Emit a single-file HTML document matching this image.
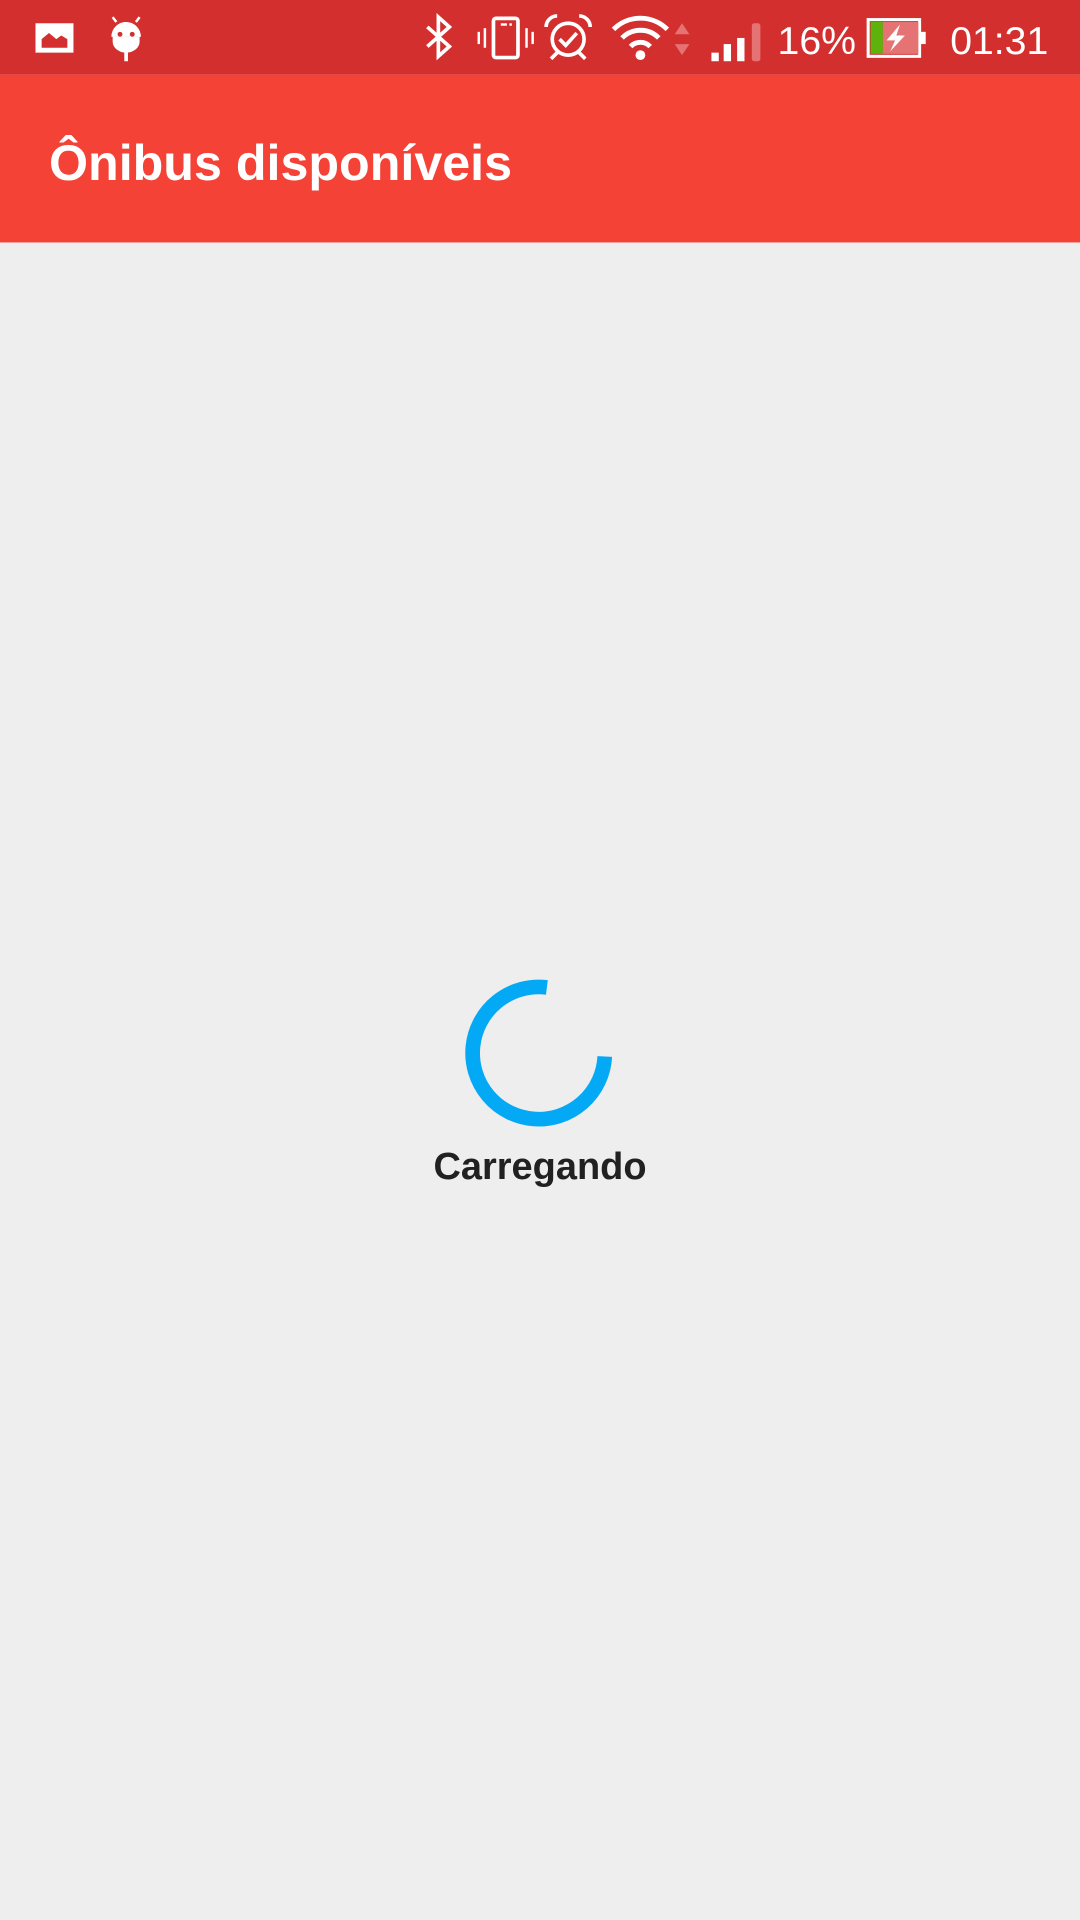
<!DOCTYPE html>
<html><head><meta charset="utf-8">
<style>
html,body{margin:0;padding:0;width:1080px;height:1920px;overflow:hidden;background:#EEEEEE;}
#w{position:absolute;left:0;top:0;width:882px;height:1568px;transform:scale(1.22449);transform-origin:0 0;font-family:"Liberation Sans",sans-serif;}
.sb{position:absolute;left:0;top:0;width:882px;height:61px;background:#D32F2F;}
.ab{position:absolute;left:0;top:61px;width:882px;height:137px;background:#F44336;}
.title{position:absolute;left:40px;top:42px;color:#fff;font-size:41px;font-weight:bold;line-height:60px;}
.t{position:absolute;color:#fff;font-size:32px;line-height:40px;top:13px;}
.lbl{position:absolute;left:0;width:882px;top:932px;text-align:center;font-size:31px;font-weight:bold;color:#212121;line-height:42px;}
</style></head><body>
<div id="w">
<div class="sb">
<svg width="882" height="61" style="position:absolute;left:0;top:0">
 <rect x="29" y="19" width="31" height="24" fill="#fff"/>
 <path d="M34 39 V32 L40 27 L46 32 L50 29 L55 32 V39 Z" fill="#D32F2F"/>
 <circle cx="103" cy="30" r="12" fill="#fff"/>
 <rect x="89" y="30" width="28" height="10" fill="#D32F2F"/>
 <path d="M91 30 A12 12 0 0 1 115 30 Z" fill="#fff"/>
 <path d="M92 30 h22 v4 a11 9 0 0 1 -22 0 z" fill="#fff"/>
 <line x1="95" y1="18" x2="92" y2="14" stroke="#fff" stroke-width="2"/>
 <line x1="111" y1="18" x2="114" y2="14" stroke="#fff" stroke-width="2"/>
 <circle cx="98" cy="28" r="2" fill="#D32F2F"/><circle cx="108" cy="28" r="2" fill="#D32F2F"/>
 <rect x="101.5" y="40" width="3" height="10" fill="#fff"/>
 <path d="M349 22 L367 38 L358 46 V14 L367 22 L349 38" fill="none" stroke="#fff" stroke-width="3"/>
 <rect x="403" y="15" width="20" height="32" rx="2" fill="none" stroke="#fff" stroke-width="3"/>
 <rect x="409" y="19" width="5" height="2" fill="#fff"/><rect x="416" y="19" width="2" height="2" fill="#fff"/>
 <rect x="395" y="23" width="2" height="16" fill="#fff"/><rect x="390" y="26" width="2" height="10" fill="#fff"/>
 <rect x="429" y="23" width="2" height="16" fill="#fff"/><rect x="434" y="26" width="2" height="10" fill="#fff"/>
 <circle cx="464" cy="32" r="13" fill="none" stroke="#fff" stroke-width="3"/>
 <path d="M457 32 L462 37 L471 27" fill="none" stroke="#fff" stroke-width="3"/>
 <path d="M446 22 A9 9 0 0 1 455 13" fill="none" stroke="#fff" stroke-width="3"/>
 <path d="M482 22 A9 9 0 0 0 473 13" fill="none" stroke="#fff" stroke-width="3"/>
 <line x1="455" y1="43" x2="450" y2="48" stroke="#fff" stroke-width="3"/>
 <line x1="473" y1="43" x2="478" y2="48" stroke="#fff" stroke-width="3"/>
 <path d="M501 24 A31 31 0 0 1 545 24" fill="none" stroke="#fff" stroke-width="4"/>
 <path d="M508 31 A21 21 0 0 1 538 31" fill="none" stroke="#fff" stroke-width="4"/>
 <path d="M515 38 A11 11 0 0 1 531 38" fill="none" stroke="#fff" stroke-width="4"/>
 <circle cx="523" cy="45" r="4" fill="#fff"/>
 <path d="M551 28 L557 19 L563 28 Z" fill="#E57373"/>
 <path d="M551 36 L557 45 L563 36 Z" fill="#E57373"/>
 <rect x="581" y="43" width="6" height="7" fill="#fff"/>
 <rect x="591" y="36" width="6" height="14" fill="#fff"/>
 <rect x="602" y="31" width="6" height="19" fill="#fff"/>
 <rect x="614" y="19" width="7" height="31" rx="2" fill="#E57373"/>
 <rect x="709" y="16" width="42" height="30" fill="none" stroke="#fff" stroke-width="2.5"/>
 <rect x="711" y="18" width="10" height="26" fill="#5DB30B"/>
 <rect x="721" y="18" width="29" height="26" fill="#E57373"/>
 <rect x="751" y="26" width="5" height="10" fill="#fff"/>
 <path d="M735 20 L724 33 H731 L727 42 L739 29 H732 Z" fill="#fff"/>
</svg>
<div class="t" style="left:635px;">16%</div>
<div class="t" style="left:776px;">01:31</div>
</div>
<div class="ab"><div class="title">Ônibus disponíveis</div></div>
<svg width="882" height="1568" style="position:absolute;left:0;top:0">
 <path d="M493.9 862.8 A54 54 0 1 1 446.6 806.4" fill="none" stroke="#03A9F4" stroke-width="12"/>
</svg>
<div class="lbl">Carregando</div>
</div>
</body></html>
